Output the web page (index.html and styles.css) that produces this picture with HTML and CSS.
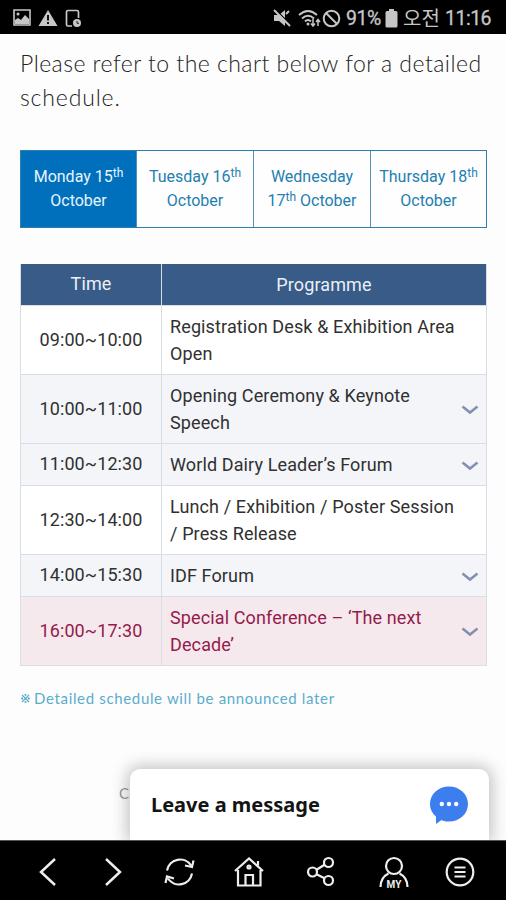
FILE: index.html
```html
<!DOCTYPE html>
<html lang="en">
<head>
<meta charset="utf-8">
<title>Schedule</title>
<link rel="stylesheet" href="styles.css">
</head>
<body>
<div class="phone">
  <header class="status">
    <div class="status-left">
      <svg width="18" height="18" viewBox="0 0 18 18"><path fill="none" stroke="#c6c6c6" stroke-width="1.6" d="M1 1h16v15H1z"/><path fill="#c6c6c6" d="M2 15v-4l3-2 3 2 4-5 4 4v5z"/><circle cx="5" cy="5" r="1.5" fill="#c6c6c6"/></svg>
      <svg width="20" height="18" viewBox="0 0 20 18"><path fill="#c6c6c6" d="M10 1l9.500 16H.5z"/><path stroke="#111" stroke-width="2" d="M10 6v5.500M10 13v2"/></svg>
      <svg width="18" height="19" viewBox="0 0 18 19"><path fill="none" stroke="#c6c6c6" stroke-width="1.700" d="M7 17H3q-1.500 0-1.500-1.500V3Q1.500 1.500 3 1.500h9q1.500 0 1.500 1.500v6"/><circle cx="12" cy="14" r="4" fill="#c6c6c6"/><path fill="none" stroke="#222" stroke-width="1" d="M12 12v2.300h2"/></svg>
    </div>
    <div class="status-right">
      <svg class="mute" width="18" height="18" viewBox="0 0 18 18"><path fill="#c6c6c6" d="M1 6h5l6-5v16l-6-5H1z"/><path stroke="#000" stroke-width="1.200" d="M3 1l14 14"/><path stroke="#c6c6c6" stroke-width="2" d="M1 1l16 16M13 5l3-3"/></svg>
      <svg class="wifi" width="24" height="19" viewBox="0 0 24 19"><g fill="none" stroke="#c6c6c6" stroke-width="2"><path d="M1 6q9-8 18 0M4 9.500q6-5.500 12 0M7 12.500q3-3 6 0"/><path stroke-width="1.500" d="M15 10v7M13 14.500l2 2.500 2-2.500M20 17v-6M18 13l2-2.500 2 2.500"/></g><circle cx="10" cy="15" r="1.500" fill="#c6c6c6"/></svg>
      <svg class="block" width="19" height="19" viewBox="0 0 19 19"><g fill="none" stroke="#c6c6c6" stroke-width="2"><circle cx="9.500" cy="9.500" r="7.800"/><path d="M4 4l11 11"/></g></svg>
      <span class="percent">91%</span>
      <svg class="battery" width="13" height="19" viewBox="0 0 13 19"><path fill="#c6c6c6" d="M4 0h5v2h2q1.500 0 1.500 1.500v13.500q0 1.500-1.500 1.500H2Q.5 18.500.5 17V3.500Q.5 2 2 2h2z"/></svg>
      <span class="ampm">오전</span>
      <span class="clock">11:16</span>
    </div>
  </header>

  <main class="content">
    <p class="intro"><span class="intro-a">Please refer to the chart below for a detailed</span><br><span class="intro-b">schedule.</span></p>

    <nav class="tabs">
      <a class="tab active">Monday 15<sup>th</sup><br>October</a>
      <a class="tab">Tuesday 16<sup>th</sup><br>October</a>
      <a class="tab">Wednesday<br>17<sup>th</sup> October</a>
      <a class="tab">Thursday 18<sup>th</sup><br>October</a>
    </nav>

    <div class="table">
      <div class="row head"><div class="time">Time</div><div class="prog">Programme</div></div>
      <div class="row tall"><div class="time">09:00~10:00</div><div class="prog">Registration Desk &amp; Exhibition Area<br>Open</div></div>
      <div class="row tall shade"><div class="time">10:00~11:00</div><div class="prog">Opening Ceremony &amp; Keynote<br>Speech</div><svg class="chev" viewBox="0 0 18 10"><path d="M1.500 1.500L9 7.500l7.500-6"/></svg></div>
      <div class="row shade"><div class="time">11:00~12:30</div><div class="prog">World Dairy Leader’s Forum</div><svg class="chev" viewBox="0 0 18 10"><path d="M1.500 1.500L9 7.500l7.500-6"/></svg></div>
      <div class="row tall"><div class="time">12:30~14:00</div><div class="prog">Lunch / Exhibition / Poster Session<br>/ Press Release</div></div>
      <div class="row shade"><div class="time">14:00~15:30</div><div class="prog">IDF Forum</div><svg class="chev" viewBox="0 0 18 10"><path d="M1.500 1.500L9 7.500l7.500-6"/></svg></div>
      <div class="row tall special"><div class="time">16:00~17:30</div><div class="prog">Special Conference – ‘The next<br>Decade’</div><svg class="chev" viewBox="0 0 18 10"><path d="M1.500 1.500L9 7.500l7.500-6"/></svg></div>
    </div>

    <p class="note"><svg width="9" height="9" viewBox="0 0 9 9"><path stroke="#5aaccd" stroke-width="1.200" d="M1 1l7 7M8 1L1 8"/><path stroke="#5aaccd" stroke-width="1.800" d="M3.600.9h1.800M3.600 8.100h1.800M.2 4.500H2M7 4.500h1.800"/></svg><span>Detailed schedule will be announced later</span></p>
    <p class="copyright">C</p>
    <aside class="chat">
      <span>Leave a message</span>
      <svg width="40" height="40" viewBox="0 0 40 40"><path fill="#3d7eef" d="M20 1.500c10.500 0 19 7.500 19 17.500s-8.500 17.500-19 17.500c-3 0-5.500-.6-7.500-1.600L7 39v-7.500C3.300 28.500 1 24 1 19 1 9 9.500 1.500 20 1.500z"/><g fill="#fff"><circle cx="12.800" cy="19" r="2.200"/><circle cx="20" cy="19" r="2.200"/><circle cx="27.200" cy="19" r="2.200"/></g></svg>
    </aside>
  </main>

  <footer class="bottom">
    <svg viewBox="0 0 32 32"><path stroke-width="2.500" d="M23 3L9 16l14 13"/></svg>
    <svg viewBox="0 0 32 32"><path stroke-width="2.500" d="M8 3l14 13L8 29"/></svg>
    <svg viewBox="0 0 32 32"><path d="M3 14.500a13.200 13.200 0 0 1 24-5M29.500 4.500L28 11l-7-1.500M28 17.500a13.200 13.200 0 0 1-24 5M1.500 27L3 20.500l7 2"/></svg>
    <svg viewBox="0 0 32 32"><path d="M1 15L15 2.500 29 15M4 14v15.500h22.500V14M11.500 29V19h7.500v10M24 9.500V5"/><circle cx="15" cy="11" r="1.500"/></svg>
    <svg viewBox="0 0 32 32"><circle cx="6.500" cy="16" r="4.500"/><circle cx="22.500" cy="6.500" r="4.500"/><circle cx="22.500" cy="24.500" r="4.500"/><path d="M10.500 13.700l8-5M10.500 18.300l8 4"/></svg>
    <svg viewBox="0 0 32 32"><circle cx="16" cy="10" r="8"/><path d="M2.500 31q0-9.500 8-13.500M29.500 31q0-9.500-8-13.500"/><text x="16" y="31.500" text-anchor="middle">MY</text></svg>
    <svg viewBox="0 0 32 32"><circle cx="16" cy="16" r="13.300"/><path d="M10.500 11.500h11M10.500 16h11M10.500 20.500h11"/></svg>
  </footer>
</div>
</body>
</html>
```

FILE: styles.css
```css
* { box-sizing: border-box; }
body { margin: 0; background: #000; }
p { margin: 0; }
.phone {
  width: 506px;
  height: 900px;
  display: flex;
  flex-direction: column;
  overflow: hidden;
  font-family: Roboto, "Liberation Sans", sans-serif;
}
.status {
  height: 34px;
  flex: none;
  background: #000;
  color: #c6c6c6;
  display: flex;
  justify-content: space-between;
  align-items: center;
  padding: 2px 15px 0 13px;
}
.status-left { display: flex; gap: 7px; }
.status-right { display: flex; align-items: center; height: 32px; }
.mute { margin-right: 7px; }
.wifi { margin-right: 0; }
.block { margin-right: 5px; }
.percent { font-size: 19.500px; width: 35px; letter-spacing: -0.4px; -webkit-text-stroke: 0.3px #c6c6c6; }
.battery { margin: 0 5px 0 4px; }
.ampm { font-family: "Noto Sans CJK KR", sans-serif; font-size: 20px; line-height: 24px; width: 38px; white-space: nowrap; }
.clock { font-size: 19.500px; width: 46px; margin-left: 4px; white-space: nowrap; letter-spacing: -0.5px; -webkit-text-stroke: 0.3px #c6c6c6; }
.content {
  position: relative;
  height: 806px;
  flex: none;
  background: #fdfdfd;
  padding: 12px 19px 0 20px;
  overflow: hidden;
}
.intro {
  height: 68px;
  font: 300 23px/34px Lato, sans-serif;
  color: #222;
  white-space: nowrap;
}
.intro-a { letter-spacing: 0.46px; }
.intro-b { letter-spacing: 0.85px; }
.tabs {
  display: grid;
  grid-template-columns: 115px 117px 117px 116px;
  height: 78px;
  margin-top: 36px;
  border: 1px solid #2f7fae;
  width: 467px;
}
.tab {
  border-left: 1px solid #4f93b8;
  text-align: center;
  font-size: 16px;
  line-height: 24px;
  color: #2380b0;
  padding-top: 14px;
  background: #fefefe;
  white-space: nowrap;
}
.tab:first-child { border-left: 0; }
.tab.active { background: #0070bd; color: #e8f4fc; }
.tab sup { font-size: 12px; line-height: 0; vertical-align: 5px; }
.table {
  width: 467px;
  margin-top: 36px;
  border: solid #d9dde4;
  border-width: 0 1px;
}
.row {
  display: grid;
  grid-template-columns: 141px 1fr;
  height: 42px;
  border-bottom: 1px solid #d9dde4;
  background: #fff;
  color: #303030;
  position: relative;
  font-size: 18px;
  line-height: 27px;
}
.row.tall { height: 69px; }
.row.head { background: #385b87; color: #eaf0f6; }
.row.shade { background: #f3f5f9; }
.row.special { background: #f6e9ee; color: #941b4b; }
.time {
  display: flex;
  align-items: center;
  justify-content: center;
  border-right: 1px solid #d9dde4;
  padding-bottom: 2px;
  letter-spacing: 0.1px;
}
.prog {
  align-self: center;
  padding: 0 0 1px 8px;
  letter-spacing: 0.12px;
  white-space: nowrap;
}
.head .prog { text-align: center; padding-left: 0; }
.chev {
  position: absolute;
  right: 7px;
  top: 50%;
  margin-top: -4px;
  width: 18px;
  height: 10px;
  fill: none;
  stroke: #8490b2;
  stroke-width: 2.600;
}
.note {
  display: flex;
  align-items: center;
  gap: 4px;
  height: 20px;
  margin-top: 22px;
  padding-left: 1px;
  font: 400 15px/20px Lato, sans-serif;
  letter-spacing: 0.66px;
  color: #5aaccd;
  white-space: nowrap;
}
.copyright { margin: 75px 0 0 99px; font: 400 15px/20px Lato, sans-serif; color: #999; }
.chat {
  position: absolute;
  left: 130px;
  right: 17px;
  bottom: 0;
  height: 71px;
  border-radius: 10px 10px 0 0;
  background: #fff;
  box-shadow: 0 0 16px 3px rgba(0, 0, 0, 0.24);
  display: flex;
  align-items: center;
  justify-content: space-between;
  padding: 0 20px 0 21px;
  font: 700 20px/28px "Noto Sans", sans-serif;
  color: #141414;
}
.bottom {
  flex: 1;
  background: #000;
  border-top: 1px solid #555;
  display: grid;
  grid-template-columns: 66px 65px 68px 71px 74px 70px 62px;
  padding: 3px 0 0 15px;
  align-items: center;
  justify-items: center;
}
.bottom svg { width: 32px; height: 32px; fill: none; stroke: #eee; stroke-width: 2.200; }
.bottom text { font: 700 10px Roboto, sans-serif; fill: #eee; stroke: none; }
```
